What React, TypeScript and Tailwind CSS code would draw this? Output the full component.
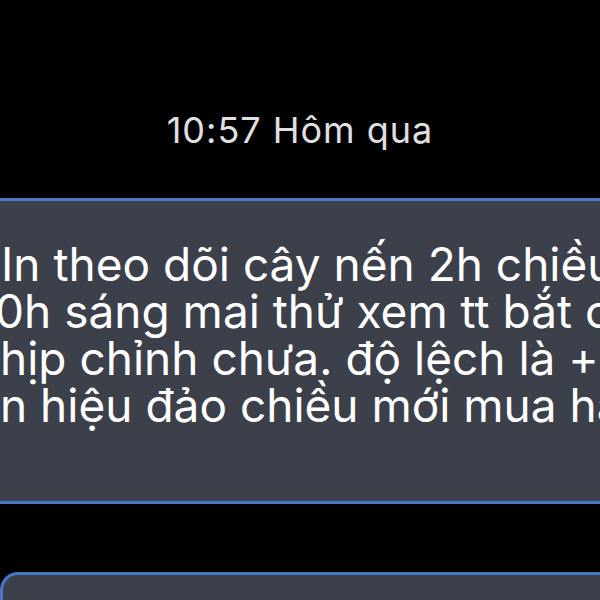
const lines = [
  { text: "In theo dõi cây nến 2h chiều nay", ml: "ml-[1px]" },
  { text: "0h sáng mai thử xem tt bắt chuẩn", ml: "-ml-[5px]" },
  { text: "hịp chỉnh chưa. độ lệch là ++", ml: "ml-0" },
  { text: "n hiệu đảo chiều mới mua hay", ml: "ml-0" },
];

export default function App() {
  return (
    <div
      className="w-[600px] h-[600px] bg-black overflow-hidden flex flex-col"
      style={{ fontFamily: "Inter, 'Noto Sans', sans-serif" }}
    >
      <div className="pt-[108px] text-center text-[36px] tracking-[1px] leading-[44px] text-[#e0e0e0]">
        10:57 Hôm qua
      </div>

      <div className="mt-[46px] -mx-[30px] bg-[#3b404b] border-y-[3px] border-[#4a76c6] rounded-[18px] pl-[30px] pt-[40px] pb-[72px] text-white text-[46px] leading-[47px]">
        {lines.map((l, i) => (
          <div key={i} className={`whitespace-nowrap ${l.ml}`}>
            {l.text}
          </div>
        ))}
      </div>

      <div className="mt-[68px] ml-0 -mr-[30px] h-[80px] bg-[#3b404b] border-t-[3px] border-l-[3px] border-[#4a76c6] rounded-tl-[18px]" />
    </div>
  );
}
